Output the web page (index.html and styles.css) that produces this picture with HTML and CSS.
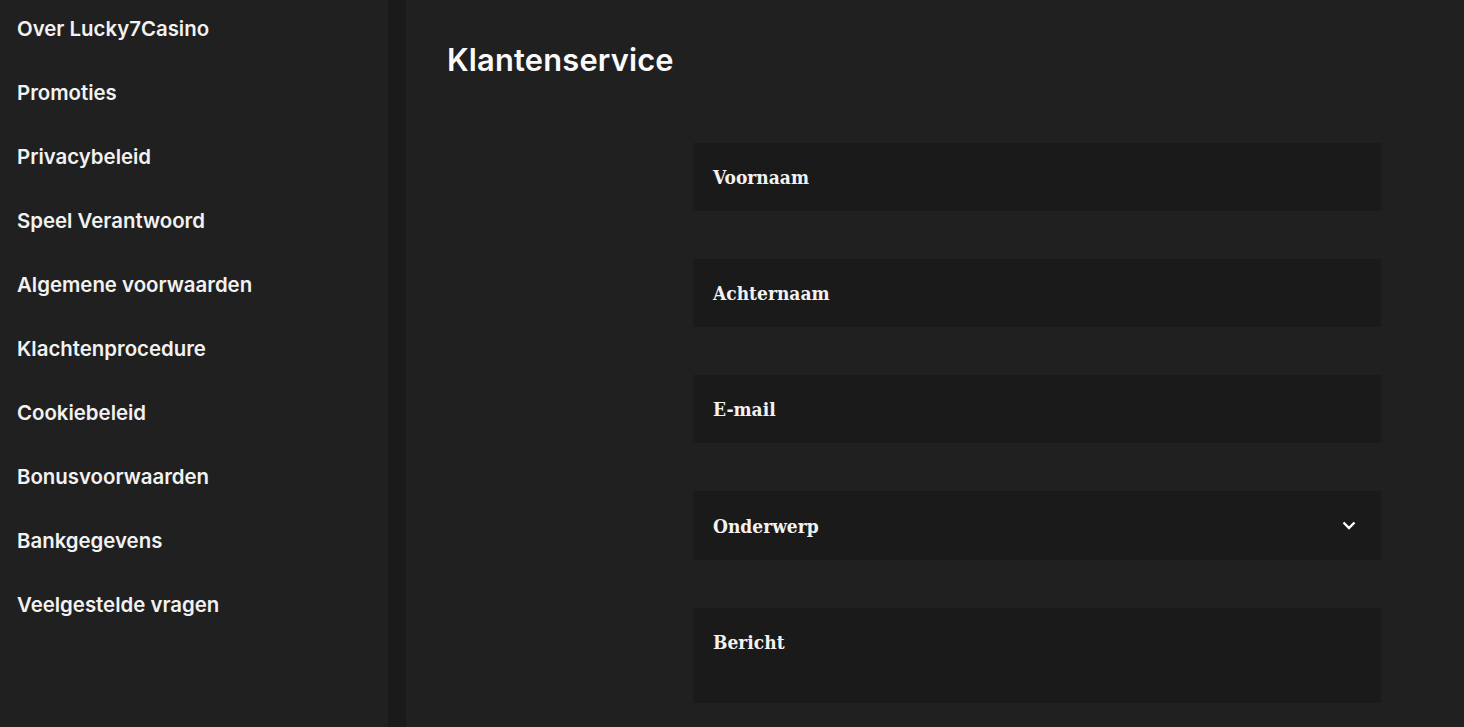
FILE: index.html
```html
<!DOCTYPE html>
<html lang="nl">
<head>
<meta charset="utf-8">
<title>Klantenservice</title>
<link rel="stylesheet" href="styles.css">
</head>
<body>
<div class="page">
  <nav class="sidebar">
    <a class="nav-item" href="#">Over Lucky7Casino</a>
    <a class="nav-item" href="#">Promoties</a>
    <a class="nav-item" href="#">Privacybeleid</a>
    <a class="nav-item" href="#">Speel Verantwoord</a>
    <a class="nav-item" href="#">Algemene voorwaarden</a>
    <a class="nav-item" href="#">Klachtenprocedure</a>
    <a class="nav-item" href="#">Cookiebeleid</a>
    <a class="nav-item" href="#">Bonusvoorwaarden</a>
    <a class="nav-item" href="#">Bankgegevens</a>
    <a class="nav-item" href="#">Veelgestelde vragen</a>
  </nav>
  <div class="divider"></div>
  <main class="content">
    <h1 class="title">Klantenservice</h1>
    <form class="form">
      <div class="field"><span class="placeholder">Voornaam</span></div>
      <div class="field"><span class="placeholder">Achternaam</span></div>
      <div class="field"><span class="placeholder">E-mail</span></div>
      <div class="field select"><span class="placeholder">Onderwerp</span>
        <svg class="chevron" width="14" height="9" viewBox="0 0 14 9"><path d="M1.5 1.5 L7 7 L12.5 1.5" fill="none" stroke="#fff" stroke-width="2.4"/></svg>
      </div>
      <div class="field textarea"><span class="placeholder">Bericht</span></div>
    </form>
  </main>
</div>
</body>
</html>
```

FILE: styles.css
```css
* { box-sizing: border-box; }
html, body { margin: 0; padding: 0; height: 100%; }
body { background: #202020; color: #f2f2f2; font-family: Inter, "Noto Sans", sans-serif; overflow: hidden; }
.page { display: flex; height: 727px; }
.sidebar { width: 388px; flex: none; background: #202020; display: flex; flex-direction: column; padding: 17px 0 0 17px; }
.nav-item { color: #f2f2f2; text-decoration: none; font-weight: 600; font-size: 20.4px; line-height: 24px; height: 64px; }
.divider { width: 18px; flex: none; background: #1a1a1a; }
.content { flex: 1; padding: 38px 0 0 41px; }
.title { margin: 0; font-size: 30.8px; font-weight: 600; line-height: 44px; color: #fafafa; letter-spacing: 0.2px; }
.form { display: flex; flex-direction: column; gap: 48px; margin: 61px 0 0 246px; width: 688px; }
.field { background: #1a1a1a; height: 68px; display: flex; align-items: center; padding: 0 20px; justify-content: space-between; }
.field.select { height: 69px; }
.field.textarea { height: 95px; align-items: flex-start; padding-top: 23px; }
.placeholder { font-family: "DejaVu Serif Condensed", "DejaVu Serif", serif; font-size: 19px; color: #f2f2f2; font-weight: 700; }
.chevron { margin-right: 5px; }
```
